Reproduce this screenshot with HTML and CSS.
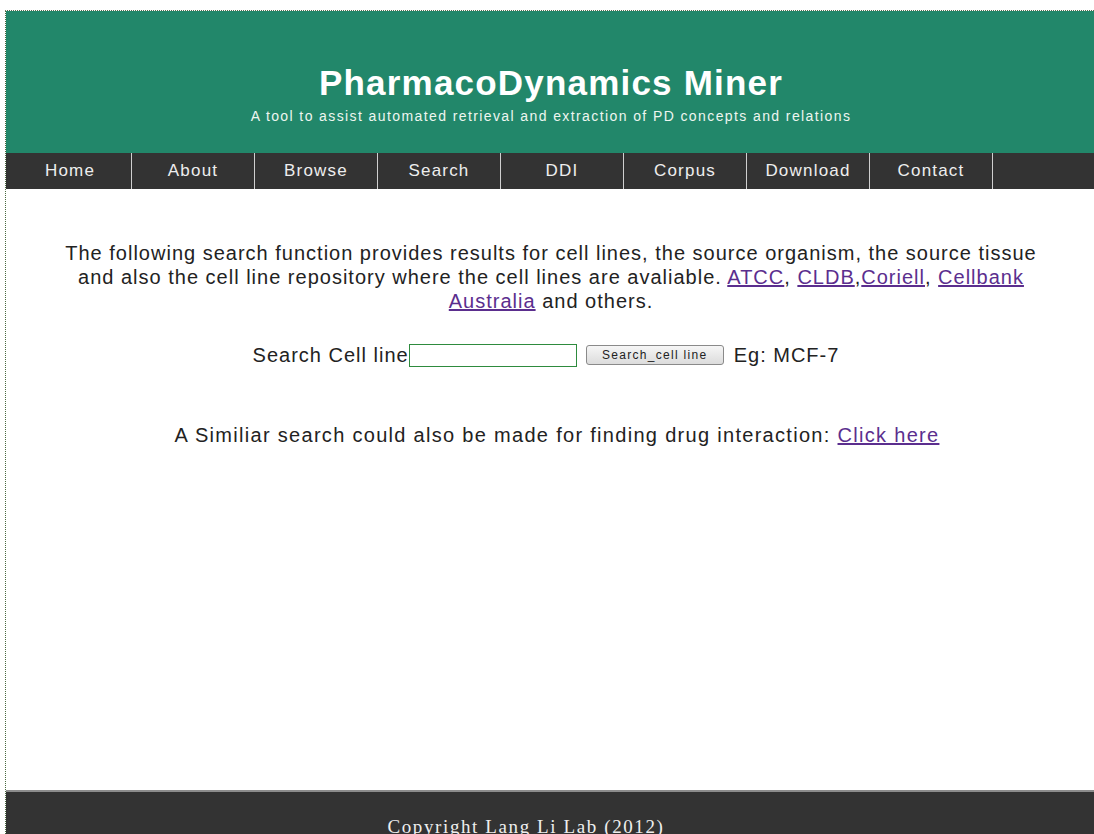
FILE: index.html
```html
<!DOCTYPE html>
<html lang="en">
<head>
<meta charset="utf-8">
<title>PharmacoDynamics Miner</title>
<link rel="stylesheet" href="styles.css">
</head>
<body>
<div class="page">
  <header class="masthead">
    <h1 class="title">PharmacoDynamics Miner</h1>
    <p class="tagline">A tool to assist automated retrieval and extraction of PD concepts and relations</p>
  </header>
  <nav class="menu">
    <a class="menu-item" href="#">Home</a>
    <a class="menu-item" href="#">About</a>
    <a class="menu-item" href="#">Browse</a>
    <a class="menu-item" href="#">Search</a>
    <a class="menu-item" href="#">DDI</a>
    <a class="menu-item" href="#">Corpus</a>
    <a class="menu-item" href="#">Download</a>
    <a class="menu-item" href="#">Contact</a>
  </nav>
  <main class="content">
    <p class="intro">The following search function provides results for cell lines, the source organism, the source tissue and also the cell line repository where the cell lines are avaliable. <a href="#">ATCC</a>, <a href="#">CLDB</a>,<a href="#">Coriell</a>, <a href="#">Cellbank Australia</a> and others.</p>
    <form class="search-row">
      <label class="search-label" for="cell">Search Cell line</label><input class="search-input" id="cell" type="text"><button class="search-btn" type="button">Search_cell line</button><span class="example">Eg: MCF-7</span>
    </form>
    <p class="alt">A Similiar search could also be made for finding drug interaction: <a href="#">Click here</a></p>
  </main>
  <footer class="footer">Copyright Lang Li Lab (2012)</footer>
</div>
</body>
</html>
```

FILE: styles.css
```css
html, body {
  margin: 0;
  padding: 0;
  overflow: hidden;
  background: #ffffff;
}

body {
  font-family: "Liberation Sans", Arial, sans-serif;
  color: #222222;
}

.page {
  margin: 10px 0 0 5px;
  width: 1090px;
  border-top: 1px dotted #5a6a50;
  border-left: 1px dotted #4a6a40;
  display: flex;
  flex-direction: column;
  min-height: 885px;
}

.masthead {
  background: #22876a;
  color: #ffffff;
  text-align: center;
  padding: 53px 0 28px;
}

.title {
  margin: 0;
  font-size: 35px;
  line-height: 38px;
  font-weight: bold;
  letter-spacing: 1.2px;
}

.tagline {
  margin: 6px 0 0;
  font-size: 14px;
  line-height: 17px;
  letter-spacing: 1.4px;
  color: #eef6f0;
}

.menu {
  background: #333333;
  height: 36px;
  display: flex;
  padding-left: 3px;
}

.menu-item {
  width: 122px;
  border-right: 1px solid #d0d0d0;
  color: #eeeeee;
  text-decoration: none;
  font-size: 17px;
  letter-spacing: 1.2px;
  line-height: 36px;
  text-align: center;
}

.content {
  flex: 1;
  text-align: center;
  padding: 52px 40px 0;
  font-size: 20px;
  letter-spacing: 1px;
  line-height: 24px;
}

.content a {
  color: #5b2e8e;
}

.intro {
  margin: 0;
}

.search-row {
  margin: 29px 0 0;
  display: flex;
  justify-content: center;
  align-items: center;
  height: 26px;
  padding-right: 10px;
}

.search-input {
  width: 166px;
  height: 21px;
  margin: 0 9px 0 0;
  padding: 0;
  border: 1px solid #2e8b3e;
  background: #ffffff;
}

.search-btn {
  font-family: "Liberation Sans", Arial, sans-serif;
  font-size: 12px;
  letter-spacing: 1.3px;
  width: 138px;
  height: 20px;
  padding: 0;
  margin: 0 10px 0 0;
  color: #222222;
  background: linear-gradient(#f6f6f6, #dcdcdc);
  border: 1px solid #8a8a8a;
  border-radius: 3px;
}

.alt {
  margin: 55px 0 0 12px;
  letter-spacing: 1.3px;
}

.footer {
  background: #333333;
  border-top: 2px solid #8c8c8c;
  color: #eeeeee;
  font-family: "Liberation Serif", "Times New Roman", serif;
  font-size: 19px;
  letter-spacing: 1.6px;
  text-align: center;
  padding: 24px 50px 0 0;
  height: 80px;
}
```
